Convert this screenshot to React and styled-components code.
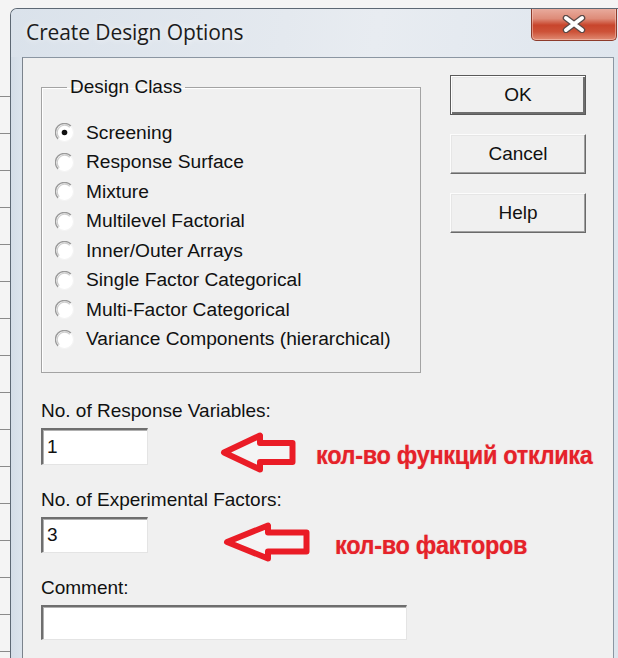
import React from 'react';
import styled, { createGlobalStyle } from 'styled-components';

const GlobalStyle = createGlobalStyle`
  html, body { margin: 0; padding: 0; }
  body { width: 618px; height: 658px; overflow: hidden; background: #f7f7f7; }
`;

const Desktop = styled.div`
  width: 618px;
  height: 658px;
  box-sizing: border-box;
  overflow: hidden;
  padding: 8px 0 0 10px;
  display: flex;
  background:
    repeating-linear-gradient(to bottom, transparent 0 36px, #8a8a8a 36px 37px) 0 60px / 10px 100% no-repeat,
    #f4f4f4;
`;

const Window = styled.div`
  flex: 1;
  display: flex;
  flex-direction: column;
  border-top: 1px solid #5d6874;
  border-left: 1px solid #5d6874;
  border-top-left-radius: 7px;
  background: linear-gradient(to right, #d4dde7 0, #dbe3ec 10px, #dde5ed 100%);
  overflow: hidden;
`;

const TitleBar = styled.div`
  height: 48px;
  display: flex;
  align-items: flex-start;
  justify-content: space-between;
  background: linear-gradient(100deg, #dae2eb 0%, #e4e9ef 45%, #e8ecf1 60%, #dfe6ee 100%);
`;

const Title = styled.div`
  font-family: "Open Sans", "Noto Sans", sans-serif;
  font-size: 21px;
  letter-spacing: -0.1px;
  color: #1c1c1c;
  line-height: 46px;
  padding-left: 15px;
  text-shadow: 0 0 6px rgba(255, 255, 255, 0.9);
`;

const CloseButton = styled.div`
  width: 86px;
  height: 34px;
  margin: -2px 1px 0 0;
  box-sizing: border-box;
  border: 1px solid #8d3b2b;
  border-top: none;
  border-radius: 0 0 5px 5px;
  background: linear-gradient(to bottom, #eab1a4 0%, #de8c79 35%, #c8452c 55%, #cd5238 75%, #e08c74 100%);
  box-shadow: inset 0 0 0 1px rgba(255, 220, 210, 0.45);
  display: flex;
  align-items: center;
  justify-content: center;
`;

const Client = styled.div`
  flex: 1;
  margin: 0 4px 0 11px;
  background: #f0f0f0;
  border-top: 1px solid #8b96a2;
  border-left: 1px solid #7b838c;
  border-right: 1px solid #8b96a2;
  padding: 17px 0 0 18px;
  display: flex;
  gap: 29px;
  align-items: flex-start;
  font-family: "Liberation Sans", Arial, sans-serif;
  color: #111;
`;

const MainColumn = styled.div`
  flex: none;
  width: 380px;
  display: flex;
  flex-direction: column;
`;

const GroupBox = styled.fieldset`
  width: 380px;
  box-sizing: border-box;
  margin: 1px 0 0 0;
  padding: 20px 0 18px 13px;
  border: 1px solid #a3a3a3;
  box-shadow: inset 1px 1px 0 #fff;
`;

const Legend = styled.legend`
  margin-left: 12px;
  padding: 0 3px;
  font-size: 19px;
  line-height: 22px;
`;

const RadioRow = styled.label`
  display: flex;
  align-items: center;
  height: 29.5px;
  gap: 12px;
  font-size: 19.2px;
`;

const Field = styled.div`
  display: flex;
  flex-direction: column;
  gap: 6px;
  margin-top: ${p => p.$top}px;
`;

const FieldLabel = styled.div`
  font-size: 19px;
  line-height: 22px;
`;

/* the red call-outs run past the column on the right, so the row keeps the text box height */
const FieldRow = styled.div`
  display: flex;
  align-items: flex-start;
  height: ${p => p.$h}px;
  overflow: visible;
`;

const TextBox = styled.div`
  flex: none;
  width: ${p => p.$w}px;
  height: ${p => p.$h}px;
  box-sizing: border-box;
  background: #fff;
  border-style: solid;
  border-width: 2px 1px 1px 2px;
  border-color: #6e6e6e #e4e4e4 #e4e4e4 #6e6e6e;
  box-shadow: inset 1px 1px 0 #b0b0b0;
  font-size: 19px;
  line-height: ${p => p.$h - 4}px;
  padding-left: 4px;
`;

const Arrow = styled.svg`
  flex: none;
  margin-left: ${p => p.$left}px;
  margin-top: ${p => p.$top}px;
`;

/* condensed bold call-out text */
const Note = styled.div`
  flex: none;
  font-family: "Liberation Sans", Arial, sans-serif;
  font-weight: 700;
  font-size: 26px;
  line-height: 30px;
  letter-spacing: -0.3px;
  transform: scaleX(0.9);
  transform-origin: left center;
  color: #e5222a;
  margin-left: ${p => p.$left}px;
  margin-top: ${p => p.$top}px;
  text-shadow: 0 0 1px rgba(229, 34, 42, 0.5);
  white-space: nowrap;
`;

const ButtonColumn = styled.div`
  display: flex;
  flex-direction: column;
  gap: 19px;
`;

const Button = styled.div`
  width: 136px;
  height: 40px;
  box-sizing: border-box;
  background: #f0f0f0;
  display: flex;
  align-items: center;
  justify-content: center;
  font-size: 19px;
  border: 1px solid;
  border-color: ${p => (p.$default ? '#5a5a5a' : '#fcfcfc #6a6a6a #6a6a6a #fcfcfc')};
  box-shadow: ${p =>
    p.$default
      ? 'inset 1px 1px 0 #fff, inset -2px -2px 0 #6e6e6e, inset 2px 2px 0 #e6e6e6'
      : 'inset -1px -1px 0 #a0a0a0, inset 1px 1px 0 #e6e6e6'};
`;

function Radio({ checked }) {
  return (
    <svg width="19" height="19" viewBox="0 0 19 19">
      <circle cx="9.5" cy="9.5" r="9" fill="#fff" />
      <path d="M3.1 15.9 A9 9 0 0 1 15.9 3.1" fill="none" stroke="#9a9a9a" strokeWidth="1.4" />
      <path d="M4.2 14.8 A7.5 7.5 0 0 1 14.8 4.2" fill="none" stroke="#cfcfcf" strokeWidth="1.3" />
      <path d="M15.9 3.1 A9 9 0 0 1 3.1 15.9" fill="none" stroke="#f4f4f4" strokeWidth="1.2" />
      {checked && <circle cx="9.5" cy="9.5" r="2.8" fill="#111" />}
    </svg>
  );
}

function LeftArrow({ w, h, left, top }) {
  const hx = Math.round(w * 0.52);
  const mid = h / 2;
  return (
    <Arrow $left={left} $top={top} width={w} height={h} viewBox={`0 0 ${w} ${h}`}>
      <polygon
        points={`4,${mid} ${hx},3.5 ${hx},${mid - 9.5} ${w - 3.5},${mid - 9.5} ${w - 3.5},${mid + 9.5} ${hx},${mid + 9.5} ${hx},${h - 3.5}`}
        fill="#f4f4f4"
        stroke="#ea1c26"
        strokeWidth="6"
        strokeLinejoin="round"
      />
    </Arrow>
  );
}

const designClasses = [
  'Screening',
  'Response Surface',
  'Mixture',
  'Multilevel Factorial',
  'Inner/Outer Arrays',
  'Single Factor Categorical',
  'Multi-Factor Categorical',
  'Variance Components (hierarchical)',
];

export default function App() {
  return (
    <>
      <GlobalStyle />
      <Desktop>
        <Window>
          <TitleBar>
            <Title>Create Design Options</Title>
            <CloseButton>
              <svg width="28" height="18" viewBox="0 0 28 18">
                <path d="M6 3 L22 15 M22 3 L6 15" stroke="#5a4a48" strokeWidth="6.5" strokeLinecap="round" />
                <path d="M6 3 L22 15 M22 3 L6 15" stroke="#fff" strokeWidth="4" strokeLinecap="round" />
              </svg>
            </CloseButton>
          </TitleBar>
          <Client>
            <MainColumn>
              <GroupBox>
                <Legend>Design Class</Legend>
                {designClasses.map((name, i) => (
                  <RadioRow key={name}>
                    <Radio checked={i === 0} />
                    {name}
                  </RadioRow>
                ))}
              </GroupBox>

              <Field $top={27}>
                <FieldLabel>No. of Response Variables:</FieldLabel>
                <FieldRow $h={37}>
                  <TextBox $w={107} $h={37}>1</TextBox>
                  <LeftArrow w={76} h={41} left={72} top={4} />
                  <Note $left={20} $top={12}>кол-во функций отклика</Note>
                </FieldRow>
              </Field>

              <Field $top={24}>
                <FieldLabel>No. of Experimental Factors:</FieldLabel>
                <FieldRow $h={36}>
                  <TextBox $w={107} $h={36}>3</TextBox>
                  <LeftArrow w={87} h={40} left={75} top={5} />
                  <Note $left={25} $top={13}>кол-во факторов</Note>
                </FieldRow>
              </Field>

              <Field $top={24}>
                <FieldLabel>Comment:</FieldLabel>
                <TextBox $w={366} $h={35} />
              </Field>
            </MainColumn>

            <ButtonColumn>
              <Button $default>OK</Button>
              <Button>Cancel</Button>
              <Button>Help</Button>
            </ButtonColumn>
          </Client>
        </Window>
      </Desktop>
    </>
  );
}
